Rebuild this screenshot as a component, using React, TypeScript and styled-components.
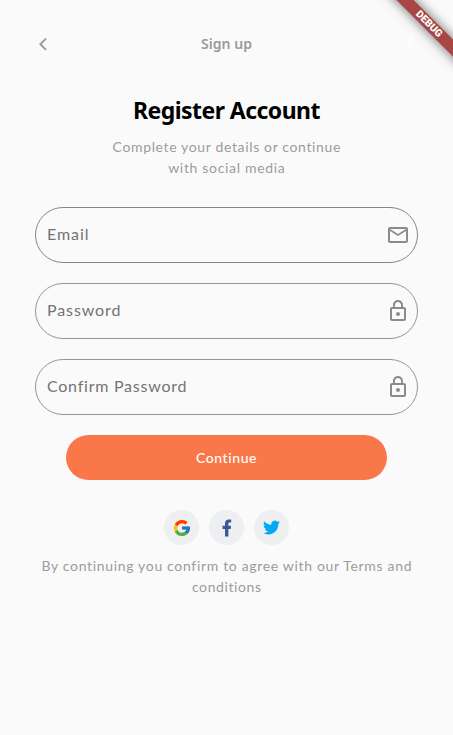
import React from "react";
import styled, { createGlobalStyle } from "styled-components";

const GlobalStyle = createGlobalStyle`
  * { box-sizing: border-box; }
  html, body { margin: 0; padding: 0; background: #fafafa; }
`;

const Screen = styled.main`
  position: relative;
  overflow: hidden;
  width: 453px;
  height: 735px;
  background: #fafafa;
  display: flex;
  flex-direction: column;
  align-items: center;
  font-family: Lato, "Open Sans", sans-serif;
`;

const Banner = styled.div`
  position: absolute;
  left: 369px;
  top: 18px;
  width: 120px;
  height: 12px;
  transform: rotate(45deg);
  background: #a94545;
  box-shadow: 0 0 12px rgba(0, 0, 0, 0.6);
  color: #fff;
  font: 900 10.2px/12px Roboto, sans-serif;
  text-align: center;
`;

const AppBar = styled.header`
  width: 100%;
  height: 88px;
  padding: 0 31px;
  display: flex;
  align-items: center;
  justify-content: space-between;
`;

const IconSlot = styled.span<{ $color: string }>`
  display: flex;
  width: 24px;
  height: 24px;
  color: ${(p) => p.$color};
`;

const Title = styled.h1`
  margin: 0;
  color: #999;
  font: 600 14px/20px "Noto Sans", sans-serif;
  letter-spacing: 0.05px;
`;

const Heading = styled.h2`
  margin: 4px 0 0;
  height: 36px;
  color: #000;
  font: 700 23px/36px "Noto Sans", sans-serif;
  letter-spacing: -0.55px;
  white-space: nowrap;
`;

const Paragraph = styled.div<{ $top: number }>`
  margin-top: ${(p) => p.$top}px;
  display: flex;
  flex-direction: column;
  align-items: center;
  color: #9c9c9c;
  font-size: 14px;
  line-height: 21px;
  white-space: nowrap;
`;

const Line = styled.span<{ $spacing: number }>`
  letter-spacing: ${(p) => p.$spacing}px;
  margin-right: -${(p) => p.$spacing}px;
`;

const Form = styled.form`
  width: 383px;
  margin-top: 29px;
  display: flex;
  flex-direction: column;
  align-items: center;
  gap: 20px;
`;

const Field = styled.label<{ $border: string }>`
  width: 100%;
  height: 56px;
  padding: 0 7px 0 11px;
  border: 1px solid ${(p) => p.$border};
  border-radius: 28px;
  display: flex;
  align-items: center;
  justify-content: space-between;
`;

const FieldText = styled.span<{ $spacing: number }>`
  color: #737373;
  font-size: 16px;
  line-height: 20px;
  padding-bottom: 2px;
  letter-spacing: ${(p) => p.$spacing}px;
`;

const Continue = styled.button`
  width: 321px;
  height: 45px;
  padding: 0;
  border: 0;
  border-radius: 22.5px;
  background: #f97748;
  color: #fff;
  font: 500 14px/20px Lato, sans-serif;
  letter-spacing: 0.6px;
`;

const Socials = styled.div`
  margin-top: 30px;
  display: flex;
  gap: 10px;
`;

const Social = styled.span`
  width: 35px;
  height: 35px;
  border-radius: 50%;
  background: #eeeff1;
  display: flex;
  align-items: center;
  justify-content: center;
`;

const Chevron = () => (
  <svg width="24" height="24" viewBox="0 0 24 24">
    <path fill="currentColor" d="M15.700 7.200 14.400 5.900 8 12.200l6.400 6.300 1.300-1.300-5-5z" />
  </svg>
);

const Mail = () => (
  <svg width="24" height="24" viewBox="0 0 24 24">
    <path
      fill="currentColor"
      d="M22 6c0-1.100-.9-2-2-2H4c-1.100 0-2 .9-2 2v12c0 1.100.9 2 2 2h16c1.100 0 2-.9 2-2V6zm-2 0-8 5-8-5h16zm0 12H4V8l8 5 8-5v10z"
    />
  </svg>
);

const Lock = () => (
  <svg width="24" height="24" viewBox="0 0 24 24">
    <path
      fill="currentColor"
      d="M12 17c1.100 0 2-.9 2-2s-.9-2-2-2-2 .9-2 2 .9 2 2 2zm6-9h-1V6c0-2.760-2.240-5-5-5S7 3.240 7 6v2H6c-1.100 0-2 .9-2 2v10c0 1.100.9 2 2 2h12c1.100 0 2-.9 2-2V10c0-1.100-.9-2-2-2zM8.900 6c0-1.710 1.390-3.100 3.100-3.100s3.100 1.390 3.100 3.100v2H8.900V6zM18 20H6V10h12v10z"
    />
  </svg>
);

const Google = () => (
  <svg width="16" height="16" viewBox="4 4 40 40">
    <path fill="#FFC107" d="M43.600 20.100H42V20H24v8h11.300c-1.600 4.700-6.100 8-11.300 8-6.600 0-12-5.400-12-12s5.400-12 12-12c3.100 0 5.800 1.200 8 3l5.700-5.600C34 6.100 29.300 4 24 4 13 4 4 13 4 24s9 20 20 20 20-9 20-20c0-1.300-.1-2.700-.4-3.900z" />
    <path fill="#FF3D00" d="m6.300 14.700 6.600 4.800C14.700 15.100 19 12 24 12c3.100 0 5.800 1.200 8 3l5.700-5.600C34 6.100 29.300 4 24 4 16.300 4 9.700 8.300 6.300 14.700z" />
    <path fill="#4CAF50" d="M24 44c5.200 0 9.900-2 13.400-5.200l-6.200-5.200A12 12 0 0 1 24 36c-5.200 0-9.600-3.300-11.300-7.900l-6.500 5C9.500 39.600 16.200 44 24 44z" />
    <path fill="#1976D2" d="M43.600 20.100H42V20H24v8h11.300a12 12 0 0 1-4.100 5.600l6.200 5.200C37 39.200 44 34 44 24c0-1.300-.1-2.700-.4-3.900z" />
  </svg>
);

const Facebook = () => (
  <svg width="10" height="18" viewBox="0 0 10 18">
    <path fill="#3b5999" d="M3 17.500V9.900H.5V6.700H3V4.400C3 1.900 4.500.5 6.800.5h2.400v3H7.700c-1 0-1.300.6-1.300 1.300v1.900h2.700l-.4 3.200H6.400v7.600z" />
  </svg>
);

const Twitter = () => (
  <svg width="17" height="17" viewBox="0 0 24 24">
    <path
      fill="#03a9f4"
      d="M23.950 4.570a10 10 0 0 1-2.820.770 4.960 4.960 0 0 0 2.160-2.720c-.95.550-2 .950-3.130 1.180a4.920 4.920 0 0 0-8.380 4.480C7.690 8.090 4.070 6.130 1.640 3.160a4.820 4.820 0 0 0-.67 2.480c0 1.710.87 3.210 2.190 4.100a4.900 4.900 0 0 1-2.230-.62v.06a4.920 4.920 0 0 0 3.950 4.830 5 5 0 0 1-2.210.08 4.940 4.940 0 0 0 4.600 3.420A9.870 9.870 0 0 1 0 19.540a14 14 0 0 0 7.560 2.210c9.050 0 14-7.500 14-13.990 0-.21 0-.42-.02-.63a9.940 9.940 0 0 0 2.460-2.550z"
    />
  </svg>
);

export default function App() {
  return (
    <>
      <GlobalStyle />
      <Screen>
        <AppBar>
          <IconSlot $color="#999999"><Chevron /></IconSlot>
          <Title>Sign up</Title>
          <IconSlot $color="#ffffff"><Chevron /></IconSlot>
        </AppBar>
        <Heading>Register Account</Heading>
        <Paragraph $top={8}>
          <Line $spacing={0.64}>Complete your details or continue</Line>
          <Line $spacing={0.68}>with social media</Line>
        </Paragraph>
        <Form>
          <Field $border="#858585">
            <FieldText $spacing={0.95}>Email</FieldText>
            <IconSlot $color="#8b8b8b"><Mail /></IconSlot>
          </Field>
          <Field $border="#959595">
            <FieldText $spacing={0.9}>Password</FieldText>
            <IconSlot $color="#8b8b8b"><Lock /></IconSlot>
          </Field>
          <Field $border="#959595">
            <FieldText $spacing={0.76}>Confirm Password</FieldText>
            <IconSlot $color="#8b8b8b"><Lock /></IconSlot>
          </Field>
          <Continue type="button">Continue</Continue>
        </Form>
        <Socials>
          <Social><Google /></Social>
          <Social><Facebook /></Social>
          <Social><Twitter /></Social>
        </Socials>
        <Paragraph $top={10}>
          <Line $spacing={0.67}>By continuing you confirm to agree with our Terms and</Line>
          <Line $spacing={0.6}>conditions</Line>
        </Paragraph>
        <Banner>DEBUG</Banner>
      </Screen>
    </>
  );
}
